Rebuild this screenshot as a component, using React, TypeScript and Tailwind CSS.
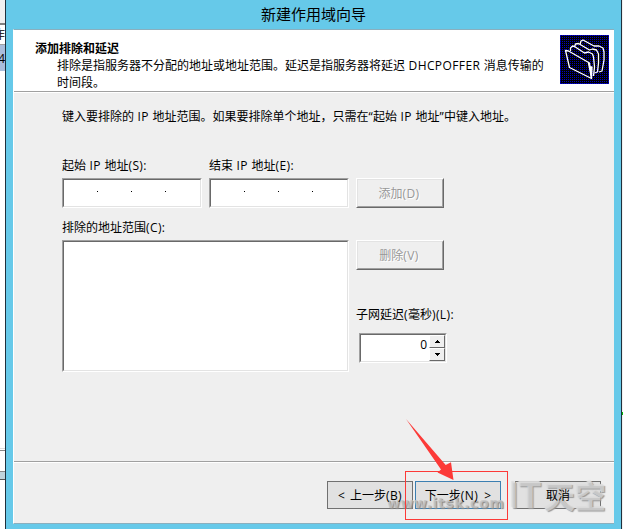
import type { ReactNode } from 'react';

const sunken = 'border border-t-[#a0a0a0] border-l-[#a0a0a0] border-b-white border-r-white';
const sunkenInner = 'h-full w-full bg-white border border-t-[#696969] border-l-[#696969] border-b-[#e3e3e3] border-r-[#e3e3e3]';

function Sunken({ className, children }: { className: string; children?: ReactNode }) {
  return (
    <div className={`${sunken} ${className}`}>
      <div className={sunkenInner}>{children}</div>
    </div>
  );
}

// Latin runs are set a little wider than the Chinese text
function Latin({ children }: { children: ReactNode }) {
  return <span className="tracking-[0.4px]">{children}</span>;
}

function IpInput() {
  return (
    <Sunken className="h-[30px] w-[140px]">
      <div className="flex gap-[33px] pl-[33px] pt-[11px]">
        <i className="size-px bg-black" />
        <i className="size-px bg-black" />
        <i className="size-px bg-black" />
      </div>
    </Sunken>
  );
}

function DisabledButton({ children }: { children: ReactNode }) {
  return (
    <button disabled className="block h-[30px] w-[88px] border border-t-white border-l-white border-b-[#696969] border-r-[#696969]">
      <span className="flex h-full items-center justify-center border border-t-[#e3e3e3] border-l-[#e3e3e3] border-b-[#a0a0a0] border-r-[#a0a0a0] pr-[2px] text-[#989898] [text-shadow:1px_1px_0_#fff]">
        {children}
      </span>
    </button>
  );
}

function Spin({ up }: { up?: boolean }) {
  return (
    <button className="flex h-[13px] w-4 items-center justify-center border border-t-white border-l-white border-b-[#696969] border-r-[#696969] bg-[#efefef]">
      <svg width="5" height="3" shapeRendering="crispEdges">
        <path d={up ? 'M2 0h1v1h1v1h1v1H0V2h1V1h1z' : 'M0 0h5v1H4v1H3v1H2V2H1V1H0z'} fill="#000" />
      </svg>
    </button>
  );
}

function FoldersIcon() {
  return (
    <svg width="49" height="49" viewBox="0 0 49 49">
      <defs>
        <pattern id="dither" width="2" height="2" patternUnits="userSpaceOnUse">
          <rect width="2" height="2" fill="#000" />
          <rect width="1" height="1" fill="#0000c0" />
        </pattern>
      </defs>
      <rect width="49" height="49" fill="url(#dither)" />
      <rect x=".5" y=".5" width="48" height="48" fill="none" stroke="#0000e0" strokeDasharray="1 1" />
      <g fill="none" stroke="#fff" strokeWidth="1.3" strokeLinejoin="round">
        <path d="M20 9.500l1-3.500 2-1 11 6h5l4 2 1 4v8l-2 11-3 1" />
        <path d="M14.500 12l1-3 3-.500 11 6.500 3-1 4 1 2 4v9l-1 9-3 1" />
        <path d="M10.500 16v-3l2-2 2 .500 10 6.500 4-1 4 2 1 3 1 10-1 9" />
        <path d="M5.500 15.500l3 .500 21 12 2 15.500-22-11z" />
        <path d="M28.500 28l1 4h2.500l-.500 11z" fill="#fff" />
      </g>
    </svg>
  );
}

export default function App() {
  return (
    <div className="relative flex h-[529px] w-[623px] overflow-hidden bg-white text-[12px] leading-[17px] text-black [font-family:'Open_Sans','Noto_Sans_CJK_SC',sans-serif]">
      {/* window behind, left edge */}
      <div className="flex w-[5px] shrink-0 flex-col overflow-hidden bg-white">
        <div className="h-[23px] shrink-0 bg-[#f0f0f0]" />
        <div className="h-[2px] shrink-0 bg-[#808080]" />
        <div className="flex h-[20px] shrink-0 items-center justify-end border-b border-[#a0a0a0]">作</div>
        <div className="flex h-[26px] shrink-0 items-center justify-end bg-[#a9bddb]">v4</div>
        <div className="h-[378px] shrink-0 border-b border-[#dcdcdc]" />
        <div className="mt-[1px] h-[22px] shrink-0 border-b border-t border-[#888]" />
        <div className="h-[8px] shrink-0 border-b border-[#555] bg-[#bfd3dc]" />
      </div>

      <div className="flex w-[617px] shrink-0 flex-col border-x border-[#20303c] bg-[#66c9e9] px-[7px]">
        <div className="flex h-[29px] shrink-0 items-center justify-center text-[15px]">新建作用域向导</div>

        <div className="flex h-[495px] w-[601px] shrink-0 flex-col border-b border-t border-l border-b-[#8aafbe] border-t-[#8aafbe] border-l-white bg-[#efefef]">
          <div className="flex h-[61px] shrink-0 bg-white">
            <div className="ml-[21px] mt-[10px] w-[525px]">
              <div className="font-bold">添加排除和延迟</div>
              <div className="whitespace-nowrap pl-[22px]">
                排除是指服务器不分配的地址或地址范围。延迟是指服务器将延迟<Latin> DHCPOFFER </Latin>消息传输的
                <br />
                时间段。
              </div>
            </div>
            <div className="mt-[5px]"><FoldersIcon /></div>
          </div>
          <div className="h-[2px] shrink-0 border-b border-t border-b-white border-t-[#a0a0a0]" />

          <div className="h-[368px] shrink-0 pl-[48px] pt-[15px]">
            <div className="whitespace-nowrap">键入要排除的<Latin> IP </Latin>地址范围。如果要排除单个地址，只需在<Latin>“</Latin>起始<Latin> IP </Latin>地址<Latin>”</Latin>中键入地址。</div>
            <div className="mt-[32px] flex gap-[7px]">
              <div>
                <div className="mb-[4px]">起始<Latin> IP </Latin>地址<Latin>(S):</Latin></div>
                <IpInput />
              </div>
              <div>
                <div className="mb-[4px]">结束<Latin> IP </Latin>地址<Latin>(E):</Latin></div>
                <IpInput />
              </div>
              <div className="pt-[21px]"><DisabledButton>添加<Latin>(D)</Latin></DisabledButton></div>
            </div>
            <div className="mt-[11px] flex gap-[7px]">
              <div>
                <div className="mb-[4px]">排除的地址范围<Latin>(C):</Latin></div>
                <Sunken className="h-[132px] w-[287px]" />
              </div>
              <div className="pt-[21px]">
                <DisabledButton>删除<Latin>(V)</Latin></DisabledButton>
                <div className="mt-[36px] whitespace-nowrap">子网延迟<Latin>(</Latin>毫秒<Latin>)(L):</Latin></div>
                <Sunken className="ml-[3px] mt-[10px] h-[30px] w-[88px]">
                  <div className="flex justify-end gap-[2px]">
                    <span className="pt-px">0</span>
                    <div><Spin up /><Spin /></div>
                  </div>
                </Sunken>
              </div>
            </div>
          </div>

          <div className="h-[2px] shrink-0 border-b border-t border-b-white border-t-[#a0a0a0]" />
          <div className="flex pl-[313px] pt-[18px]">
            <button className="h-[28px] w-[86px] whitespace-nowrap border border-[#707070] bg-[#e1e1e1]">
              <span className="relative z-10">&lt;<span className="pl-[2px]"> 上一步</span><Latin>(B)</Latin></span>
            </button>
            <button className="ml-[2px] h-[28px] w-[86px] whitespace-nowrap border border-[#3c7fb1] bg-[#e1e1e1]">
              <span className="relative z-10">下一步<Latin>(N)</Latin><span className="pl-[3px]"> &gt;</span></span>
            </button>
            <button className="ml-[14px] h-[28px] w-[86px] border border-[#707070] bg-[#e1e1e1]">
              <span className="relative z-10">取消</span>
            </button>
          </div>
        </div>
      </div>

      {/* window behind, right edge */}
      <div className="w-px shrink-0 bg-[#f0f0f0] pt-[412px]"><div className="h-[3px] bg-[#00b400]" /></div>

      {/* watermark */}
      <div className="pointer-events-none absolute left-[387px] top-[495px] whitespace-nowrap text-[14px] font-bold tracking-[0.6px] text-[#c4c4c4]/80 [font-family:'DejaVu_Sans',sans-serif] [text-shadow:1px_1px_1px_#8a8a8a]">
        www.itsk.com
      </div>
      <div className="pointer-events-none absolute left-[509px] top-[479px] flex whitespace-nowrap text-[31px] font-bold leading-[34px] text-[#dcdcdc]/70 [text-shadow:1px_1px_1px_#999,-1px_-1px_1px_#ddd]">
        <span className="text-[36px] [font-family:'Liberation_Sans',sans-serif] font-normal">I</span>
        <span className="mr-[3px] text-[36px] [font-family:'Liberation_Sans',sans-serif]">T</span>
        <span>天空</span>
      </div>

      {/* highlight */}
      <div className="pointer-events-none absolute left-[405px] top-[471px] z-20 h-[49px] w-[103px] border border-[#fc3a38]" />
      <svg className="pointer-events-none absolute left-[400px] top-[415px] z-20" width="60" height="70">
        <path d="M6 4L45.7 50 51 47.3 53.5 65 37.5 57.5 41 54.5z" fill="#fc3a38" />
      </svg>
    </div>
  );
}
